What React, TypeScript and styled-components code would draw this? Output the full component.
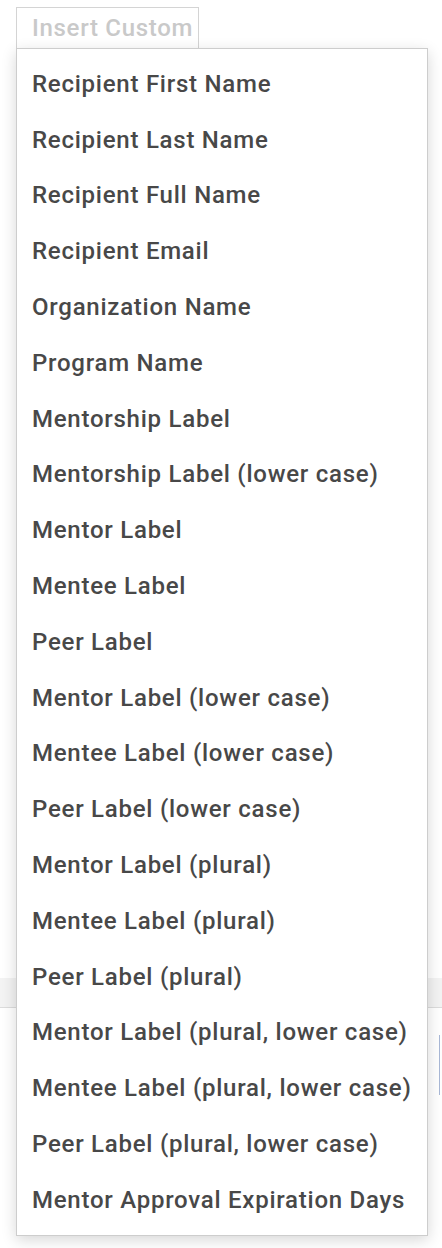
import React from 'react';
import { createGlobalStyle, styled } from 'styled-components';

const GlobalStyle = createGlobalStyle`
  html, body {
    margin: 0;
    padding: 0;
    background: #fff;
    font-family: Roboto, "Noto Sans", Arial, sans-serif;
  }
`;

const Page = styled.div`
  position: relative;
  width: 442px;
  height: 1248px;
  overflow: hidden;
  background: #fff;
`;

const Toolbar = styled.div`
  padding: 7px 0 0 16px;
`;

const InsertButton = styled.button`
  box-sizing: border-box;
  width: 183px;
  height: 42px;
  padding: 0 0 0 15px;
  text-align: left;
  border: 1px solid #d4d4d4;
  background: #fff;
  color: #c9c9c9;
  font-family: Roboto, Arial, sans-serif;
  font-size: 24px;
  font-weight: 500;
  letter-spacing: 0.7px;
  cursor: default;
`;

const Backdrop = styled.div`
  margin-top: 929px;
  display: flex;
  flex-direction: column;
`;

const Band = styled.div`
  height: 29px;
  background: #f3f3f3;
  border-bottom: 1px solid #dcdcdc;
`;

const FieldRow = styled.div`
  display: flex;
  justify-content: flex-end;
  padding-top: 27px;
`;

const FieldEdge = styled.div`
  width: 2px;
  height: 60px;
  border-left: 1px solid #a9b8d6;
  background: #fff;
`;

const Menu = styled.ul`
  position: absolute;
  top: 48px;
  left: 16px;
  box-sizing: border-box;
  width: 412px;
  height: 1188px;
  margin: 0;
  padding: 7px 0 0;
  list-style: none;
  background: #fff;
  border: 1px solid #cdcdcd;
  box-shadow: 0 4px 14px rgba(0, 0, 0, 0.16);
`;

const MenuItem = styled.li`
  height: 55.8px;
  display: flex;
  align-items: center;
  padding: 0 15px;
  color: #484848;
  font-size: 24px;
  font-weight: 500;
  letter-spacing: 0.75px;
  white-space: nowrap;
  cursor: pointer;
`;

const items = [
  'Recipient First Name',
  'Recipient Last Name',
  'Recipient Full Name',
  'Recipient Email',
  'Organization Name',
  'Program Name',
  'Mentorship Label',
  'Mentorship Label (lower case)',
  'Mentor Label',
  'Mentee Label',
  'Peer Label',
  'Mentor Label (lower case)',
  'Mentee Label (lower case)',
  'Peer Label (lower case)',
  'Mentor Label (plural)',
  'Mentee Label (plural)',
  'Peer Label (plural)',
  'Mentor Label (plural, lower case)',
  'Mentee Label (plural, lower case)',
  'Peer Label (plural, lower case)',
  'Mentor Approval Expiration Days',
];

export default function App() {
  return (
    <Page>
      <GlobalStyle />
      <Toolbar>
        <InsertButton>Insert Custom</InsertButton>
      </Toolbar>
      <Backdrop>
        <Band />
        <FieldRow>
          <FieldEdge />
        </FieldRow>
      </Backdrop>
      <Menu>
        {items.map((label) => (
          <MenuItem key={label}>{label}</MenuItem>
        ))}
      </Menu>
    </Page>
  );
}
